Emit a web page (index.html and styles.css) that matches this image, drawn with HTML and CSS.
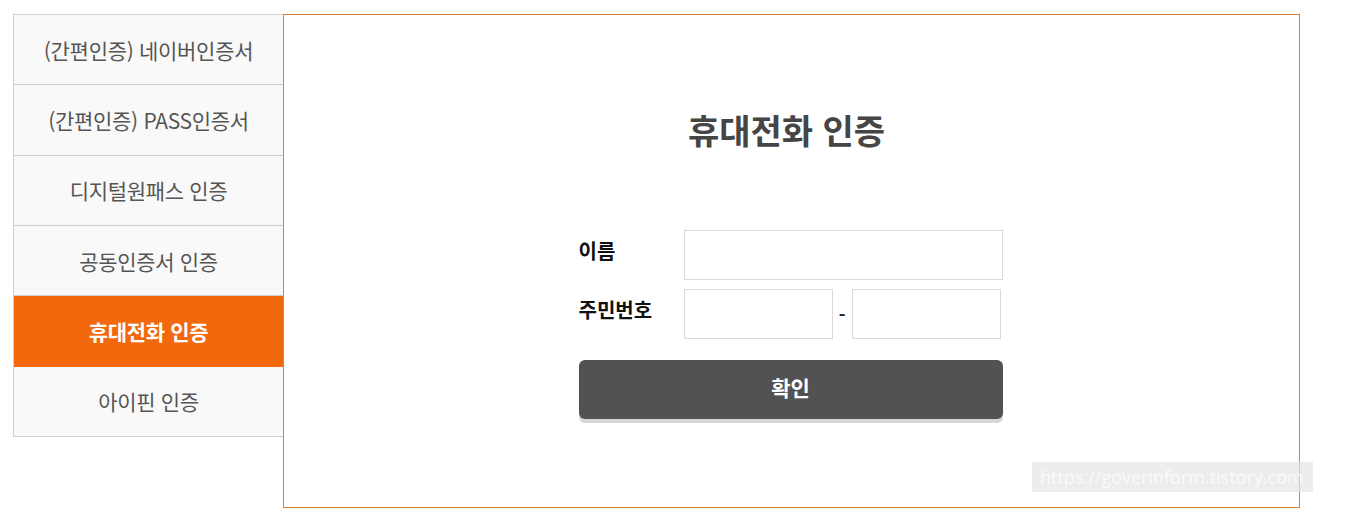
FILE: index.html
```html
<!DOCTYPE html>
<html lang="ko">
<head>
<meta charset="utf-8">
<title>휴대전화 인증</title>
<link rel="stylesheet" href="styles.css">
</head>
<body>
<div class="wrap">
  <ul class="nav">
    <li class="nav-item">(간편인증) 네이버인증서</li>
    <li class="nav-item">(간편인증) PASS인증서</li>
    <li class="nav-item">디지털원패스 인증</li>
    <li class="nav-item">공동인증서 인증</li>
    <li class="nav-item active">휴대전화 인증</li>
    <li class="nav-item">아이핀 인증</li>
  </ul>
  <section class="panel">
    <h2 class="title">휴대전화 인증</h2>
    <form class="form">
      <div class="row">
        <label class="label">이름</label>
        <input class="input wide" type="text">
      </div>
      <div class="row">
        <label class="label">주민번호</label>
        <input class="input half" type="text">
        <span class="dash">-</span>
        <input class="input half" type="password">
      </div>
      <button class="btn" type="button">확인</button>
    </form>
  </section>
</div>
<div class="watermark">https://goverinform.tistory.com</div>
</body>
</html>
```
FILE: styles.css
```css
html, body { margin: 0; padding: 0; background: #fff; }
body {
  font-family: "Noto Sans CJK KR", "Noto Sans", sans-serif;
  position: relative;
  width: 1353px;
  height: 532px;
  overflow: hidden;
}
.wrap {
  display: flex;
  align-items: flex-start;
  padding: 14px 0 0 13px;
}
.nav {
  list-style: none;
  margin: 0;
  padding: 0;
  width: 269px;
  border: 1px solid #cfcfcf;
  border-right: none;
  border-bottom: none;
}
.nav-item {
  height: 69.35px;
  border-bottom: 1px solid #cfcfcf;
  background: #f9f9f9;
  color: #555;
  font-size: 21px;
  display: flex;
  align-items: center;
  justify-content: center;
  letter-spacing: -0.3px;
}
.nav-item.active {
  background: #f2680c;
  color: #fff;
  font-weight: 700;
  border-bottom-color: #f2680c;
}
.panel {
  width: 1015px;
  height: 492px;
  border: 1px solid #d9823c;
  display: flex;
  flex-direction: column;
  align-items: center;
}
.title {
  margin: 92px 0 0;
  font-size: 34px;
  font-weight: 700;
  color: #454545;
  line-height: 46px;
  letter-spacing: 0;
  transform: translateX(-5px);
}
.form {
  margin-top: 77px;
  width: 424px;
  display: flex;
  flex-direction: column;
  transform: translateX(-1px);
}
.row {
  display: flex;
  align-items: center;
  margin-bottom: 9px;
}
.label {
  width: 105px;
  font-size: 20px;
  font-weight: 700;
  color: #111;
  align-self: flex-start;
  line-height: 42px;
}
.input {
  box-sizing: border-box;
  height: 50px;
  border: 1px solid #d9d9d9;
  background: #fff;
  margin: 0;
  padding: 0 8px;
  outline: none;
}
.input.wide { width: 319px; }
.input.half { width: 149px; }
.dash {
  width: 19px;
  text-align: center;
  font-size: 18px;
  font-weight: 700;
  color: #222;
}
.btn {
  margin-top: 12px;
  height: 59px;
  width: 424px;
  border: none;
  border-radius: 6px;
  background: #525252;
  color: #fff;
  font-family: inherit;
  font-size: 21px;
  font-weight: 700;
  line-height: 1;
  padding: 0 0 4px;
  box-shadow: 0 4px 0 #d6d6d6;
  cursor: pointer;
}
.watermark {
  position: absolute;
  left: 1032px;
  top: 462px;
  width: 281px;
  height: 30px;
  background: rgba(230, 230, 230, 0.7);
  color: #fafafa;
  font-family: "Open Sans", sans-serif;
  font-size: 18px;
  line-height: 30px;
  padding-left: 8px;
  box-sizing: border-box;
  white-space: nowrap;
  overflow: hidden;
}
```
